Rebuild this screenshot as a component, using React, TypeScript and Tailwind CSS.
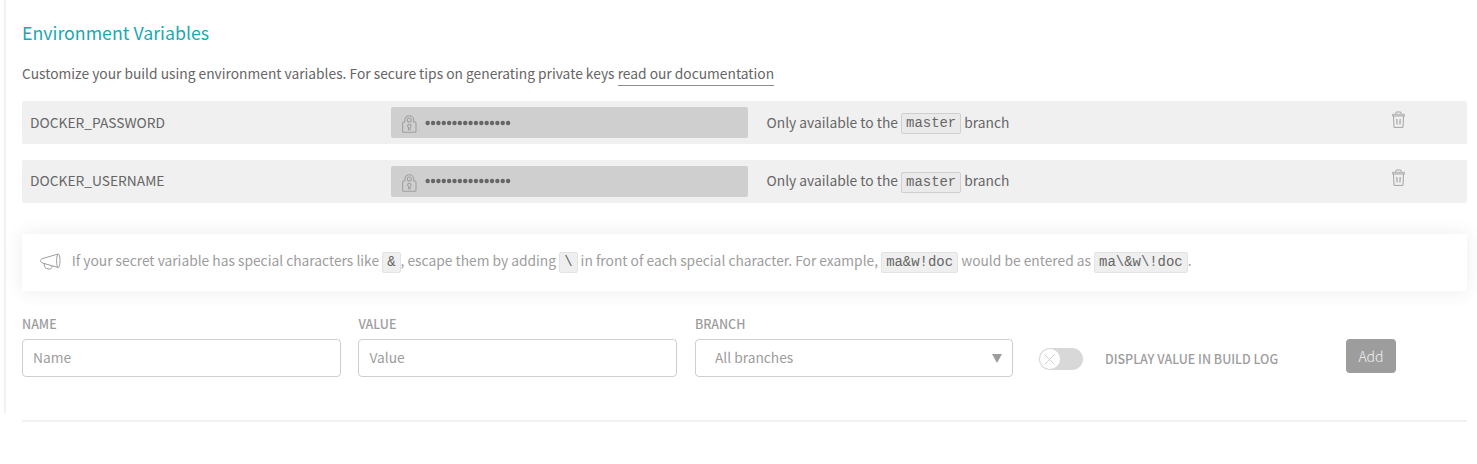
import type { ReactNode } from 'react';

const variables = [
  { name: 'DOCKER_PASSWORD', branch: 'master', raised: false },
  { name: 'DOCKER_USERNAME', branch: 'master', raised: true },
];

function LockIcon() {
  return (
    <svg className="ml-[11px] mt-[3px] h-[18px] w-[15px] shrink-0" viewBox="0 0 15 18" fill="none" stroke="#a0a0a0" strokeWidth="1.1" strokeLinejoin="round">
      <path d="M2.8 7V5.2a4.500 4.500 0 0 1 9 0V7h1.200a1 1 0 0 1 1 1v8.200a1 1 0 0 1-1 1H1.600a1 1 0 0 1-1-1V8a1 1 0 0 1 1-1Z" />
      <circle cx="7.300" cy="5" r="2" />
      <path d="M6.500 14.800v-2.400a1.700 1.700 0 1 1 1.600 0v2.400Z" />
    </svg>
  );
}

function TrashIcon() {
  return (
    <svg className="h-[17px] w-[13px]" viewBox="0 0 13 17" fill="none" stroke="#a3a3a3">
      <path d="M3.700 3V2.200a1.200 1.200 0 0 1 1.200-1.200h3.200a1.200 1.200 0 0 1 1.200 1.200V3" />
      <path d="M.5 3.300h12v1.800H.5z" fill="#d0d0d0" strokeWidth=".7" />
      <path d="m1.500 5 .5 11.400h9L11.500 5" />
      <path d="m4.800 8 .3 5.500M8.200 8l-.3 5.500" strokeWidth="1.200" />
    </svg>
  );
}

function MegaphoneIcon() {
  return (
    <svg className="ml-[18px] mt-[19px] h-[18px] w-[21px] shrink-0" viewBox="0 0 21 18" fill="none" stroke="#9d9d9d" strokeWidth="1" strokeLinejoin="round">
      <path d="M18 1 2.500 5.600C1 6 .6 6.800.6 7.800S1 9.600 2.500 10L18 14.500" />
      <ellipse cx="18.300" cy="7.800" rx="1.700" ry="6.800" />
      <path d="m4 10.600.8 3.200c.2.900.7 1.300 1.500 1.500l2.800.8c1.300.3 2.200-.5 2.600-1.600l.4-1.500" />
    </svg>
  );
}

function Code({ children }: { children: ReactNode }) {
  return (
    <code className="mt-[4px] h-[21px] rounded-[2px] border border-[#e3e3e3] bg-[#efefef] px-[4px] font-['Liberation_Mono',monospace] text-[13.950px] leading-[18px] text-[#666]">
      {children}
    </code>
  );
}

function VariableRow({ name, branch, raised }: { name: string; branch: string; raised: boolean }) {
  const textOffset = raised ? 'pb-[3px]' : 'pb-[2px]';
  return (
    <li className="flex h-[43px] items-center rounded-[2px] bg-[#f0f0f0] text-[#666]">
      <span className={`w-[369px] pl-2 ${textOffset}`}>{name}</span>
      <div className="flex h-[31px] w-[357px] items-center rounded-[2px] bg-[#cfcfcf]">
        <LockIcon />
        <svg className={`ml-[8px] h-[6px] w-[87px] ${raised ? 'mb-px' : 'mt-px'}`} viewBox="0 0 87 6" fill="#666">
          {Array.from({ length: 16 }, (_, i) => (
            <circle key={i} cx={2.7 + i * 5.36} cy="3" r="2.2" />
          ))}
        </svg>
      </div>
      <span className="flex w-[625px] items-center whitespace-pre pl-[18.500px]">
        <span className={textOffset}>Only available to the </span>
        <code className="mt-[2px] h-[21px] rounded-[2px] border border-[#cfcfcf] bg-[#eaeaea] px-[4px] font-['Liberation_Mono',monospace] text-[13.950px] leading-[18px]">{branch}</code>
        <span className={textOffset}> branch</span>
      </span>
      <button className={`ml-[18.500px] ${raised ? 'mb-2' : 'mb-1.5'}`} aria-label="Delete">
        <TrashIcon />
      </button>
    </li>
  );
}

function Field({ label, children }: { label: string; children: ReactNode }) {
  return (
    <div className="w-[318.500px] shrink-0">
      <div className="h-[24px] text-[12.450px] font-medium leading-[18px] text-[#9d9d9d]">{label}</div>
      <div className="flex h-[38px] items-center rounded-[4px] border border-[#cfcfcf] text-[#9d9d9d]">{children}</div>
    </div>
  );
}

export default function App() {
  return (
    <div className="h-[464px] bg-white pl-1 font-['Noto_Sans_CJK_JP','Noto_Sans_CJK_SC',sans-serif] text-[13.795px] leading-5">
      <section className="h-[413px] border-l-2 border-[#f1f1f1] pl-4 pr-[10px]">
        <h2 className="pt-[20px] text-[17.750px] leading-6 text-[#19a9b1]">Environment Variables</h2>
        <p className="mt-[19px] h-[38px] text-[#666]">
          Customize your build using environment variables. For secure tips on generating private keys{' '}
          <a className="inline-block h-[23px] border-b border-[#8d8d8d]">read our documentation</a>
        </p>
        <ul className="flex flex-col gap-4">
          {variables.map((v) => (
            <VariableRow key={v.name} {...v} />
          ))}
        </ul>
        <div className="mt-[31px] flex h-[57px] bg-white text-[#9d9d9d] shadow-[0_0_20px_1px_rgba(0,0,0,0.07)]">
          <MegaphoneIcon />
          <p className="ml-[10.700px] flex h-[52px] items-center whitespace-pre">
            <span>If your secret variable has special characters like </span>
            <Code>&amp;</Code>
            <span>, escape them by adding </span>
            <Code>\</Code>
            <span> in front of each special character. For example, </span>
            <Code>ma&amp;w!doc</Code>
            <span> would be entered as </span>
            <Code>ma\&amp;w\!doc</Code>
            <span>.</span>
          </p>
        </div>
        <form className="mt-[24px] flex">
          <div className="flex gap-[17.950px]">
            <Field label="NAME"><span className="pb-[2px] pl-[10px]">Name</span></Field>
            <Field label="VALUE"><span className="pb-[2px] pl-[10px]">Value</span></Field>
            <Field label="BRANCH">
              <span className="flex-1 pb-[2px] pl-[19px]">All branches</span>
              <svg className="mr-[10px] h-[9px] w-[10px]" viewBox="0 0 10 9" fill="#9d9d9d"><path d="M0 0h10L5 9Z" /></svg>
            </Field>
          </div>
          <div className="ml-[25.600px] mt-[33px] flex h-[22px] items-center">
            <span className="flex h-[22px] w-[44px] items-center rounded-full bg-[#d8d8d8] pl-px">
              <span className="flex size-5 items-center justify-center rounded-full bg-white">
                <svg className="size-[11px]" viewBox="0 0 11 11" stroke="#cfcfcf"><path d="m.5.5 10 10m0-10-10 10" /></svg>
              </span>
            </span>
            <span className="ml-[22px] w-[241px] text-[12.450px] font-medium text-[#9d9d9d]">DISPLAY VALUE IN BUILD LOG</span>
          </div>
          <button type="button" className="mt-[24px] h-[34px] w-[50px] rounded-[4px] bg-[#9d9d9d] text-[14px] font-light text-[#f1f1f1]">Add</button>
        </form>
      </section>
      <hr className="ml-[18px] mr-[10px] mt-[7px] border-t-2 border-[#f1f1f1]" />
    </div>
  );
}
